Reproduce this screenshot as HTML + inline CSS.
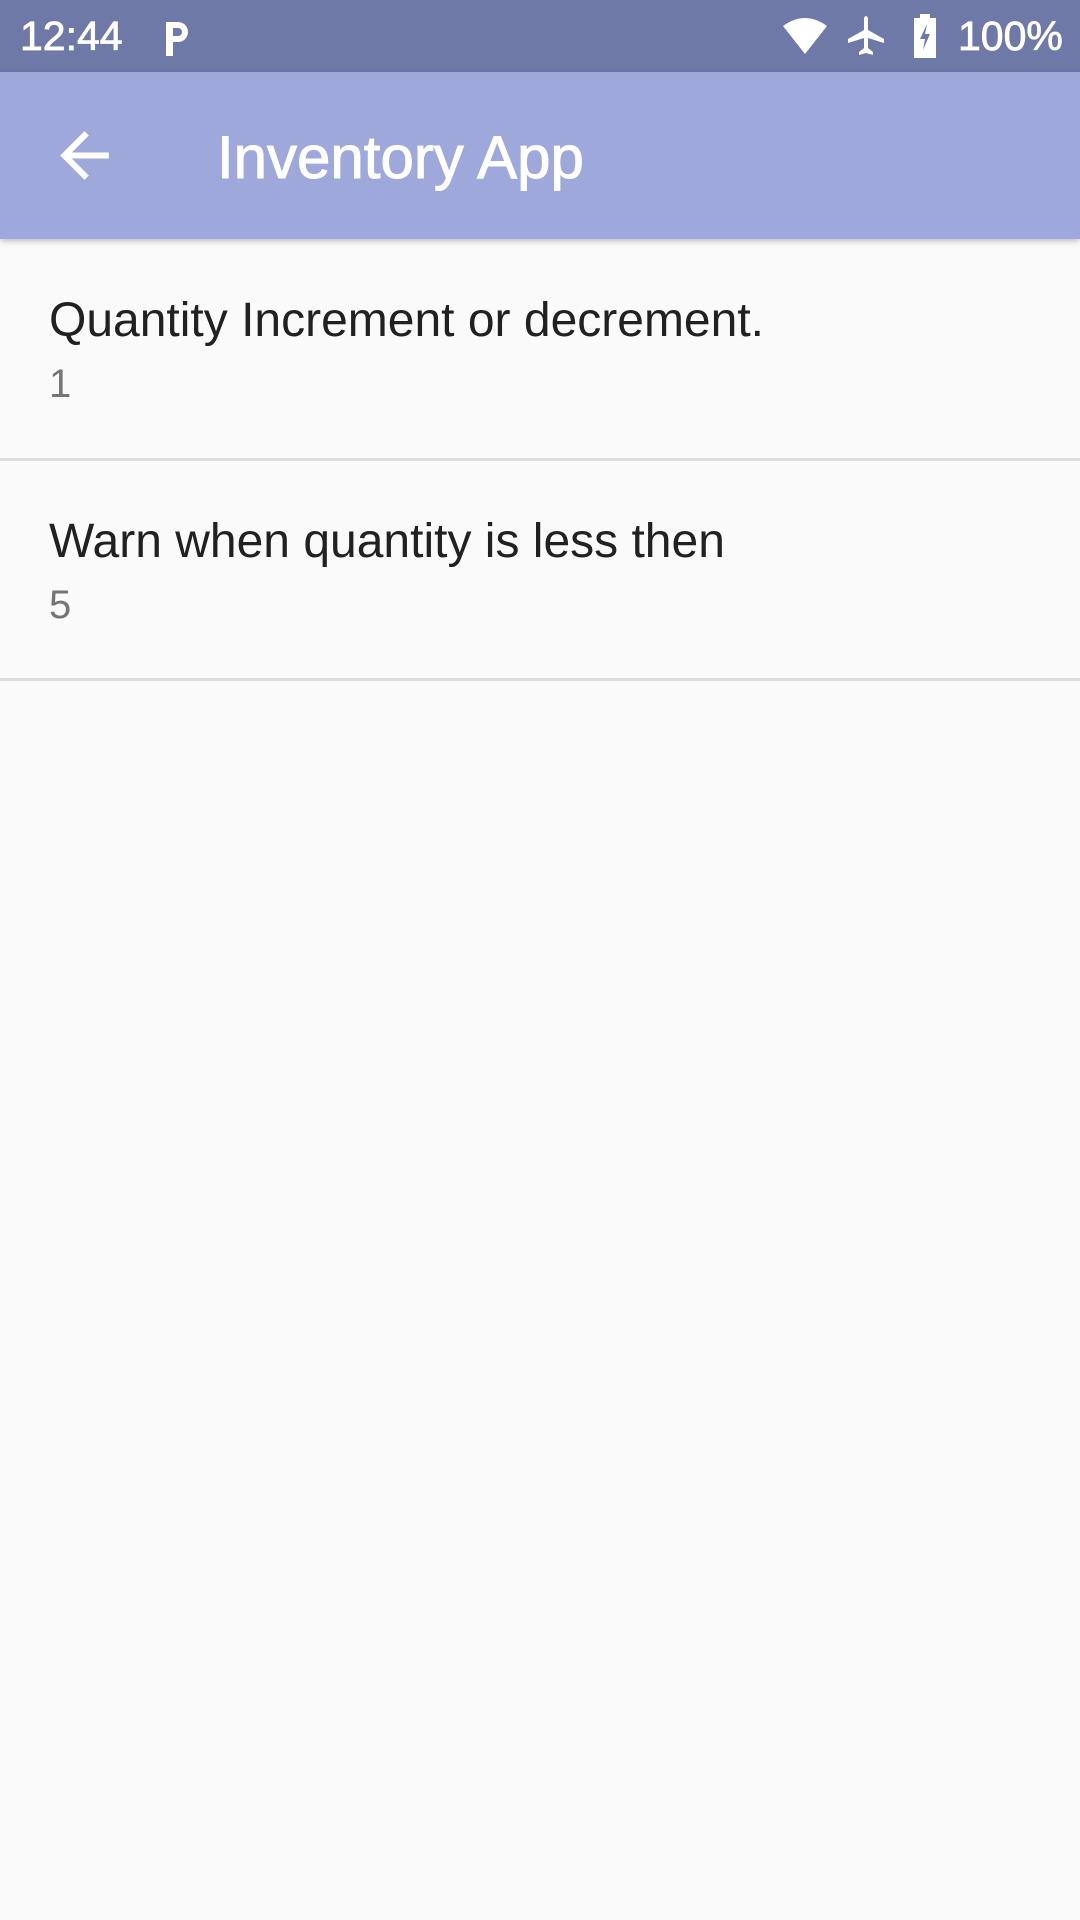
<!DOCTYPE html>
<html><head><meta charset="utf-8"><style>
body{margin:0;width:1080px;height:1920px;background:#fafafa;font-family:"Liberation Sans",sans-serif;position:relative;overflow:hidden}
.sb{position:absolute;left:0;top:0;width:1080px;height:72px;background:#6f79a8;color:#fff}
.ab{position:absolute;left:0;top:72px;width:1080px;height:167px;background:#9fa8da;box-shadow:0 2px 6px rgba(0,0,0,.25)}
.t{position:absolute;white-space:nowrap}
.div{position:absolute;left:0;width:1080px;height:3px;background:#dcdcdc}
</style></head><body>
<div class="sb">
<div class="t" style="left:20px;top:13px;font-size:41px;-webkit-text-stroke:0.8px #fff">12:44</div>
<svg style="position:absolute;left:162px;top:18px" width="32" height="40" viewBox="0 0 32 40"><path d="M4 38V4h12a10 10 0 0 1 0 20H11v14z" fill="#fff"/><path d="M11 10h5a4 4 0 0 1 0 8h-5z" fill="#6f79a8"/></svg>
<svg style="position:absolute;left:782px;top:16px" width="46" height="40" viewBox="0 0 46 40"><path d="M1 10Q23-6 45 10L23 38z" fill="#fff"/></svg>
<svg style="position:absolute;left:846px;top:14px" width="40" height="44" viewBox="0 0 40 44"><path d="M18 4q2-4 4 0v12l16 9v4l-16-5v10l5 4v3l-7-2-7 2v-3l5-4V24L2 29v-4l16-9z" fill="#fff"/></svg>
<svg style="position:absolute;left:912px;top:14px" width="26" height="44" viewBox="0 0 26 44"><path d="M8 0h10v4h6v40H2V4h6z" fill="#fff"/><path d="M15 10l-7 15h5l-2 11 7-16h-5z" fill="#6f79a8"/></svg>
<div class="t" style="left:958px;top:13px;font-size:41px;-webkit-text-stroke:0.8px #fff">100%</div>
</div>
<div class="ab">
<svg style="position:absolute;left:48px;top:47px" width="73" height="73" viewBox="0 0 24 24"><path d="M20 11H7.83l5.59-5.59L12 4l-8 8 8 8 1.41-1.41L7.83 13H20z" fill="#fff"/></svg>
<div class="t" style="left:217px;top:51px;font-size:60px;color:#fff;-webkit-text-stroke:1px #fff">Inventory App</div>
</div>
<div class="t" style="left:49px;top:293px;font-size:48px;color:#212121">Quantity Increment or decrement.</div>
<div class="t" style="left:49px;top:362px;font-size:40px;color:#757575">1</div>
<div class="div" style="top:458px"></div>
<div class="t" style="left:49px;top:514px;font-size:48px;color:#212121">Warn when quantity is less then</div>
<div class="t" style="left:49px;top:583px;font-size:40px;color:#757575">5</div>
<div class="div" style="top:678px"></div>
</body></html>
